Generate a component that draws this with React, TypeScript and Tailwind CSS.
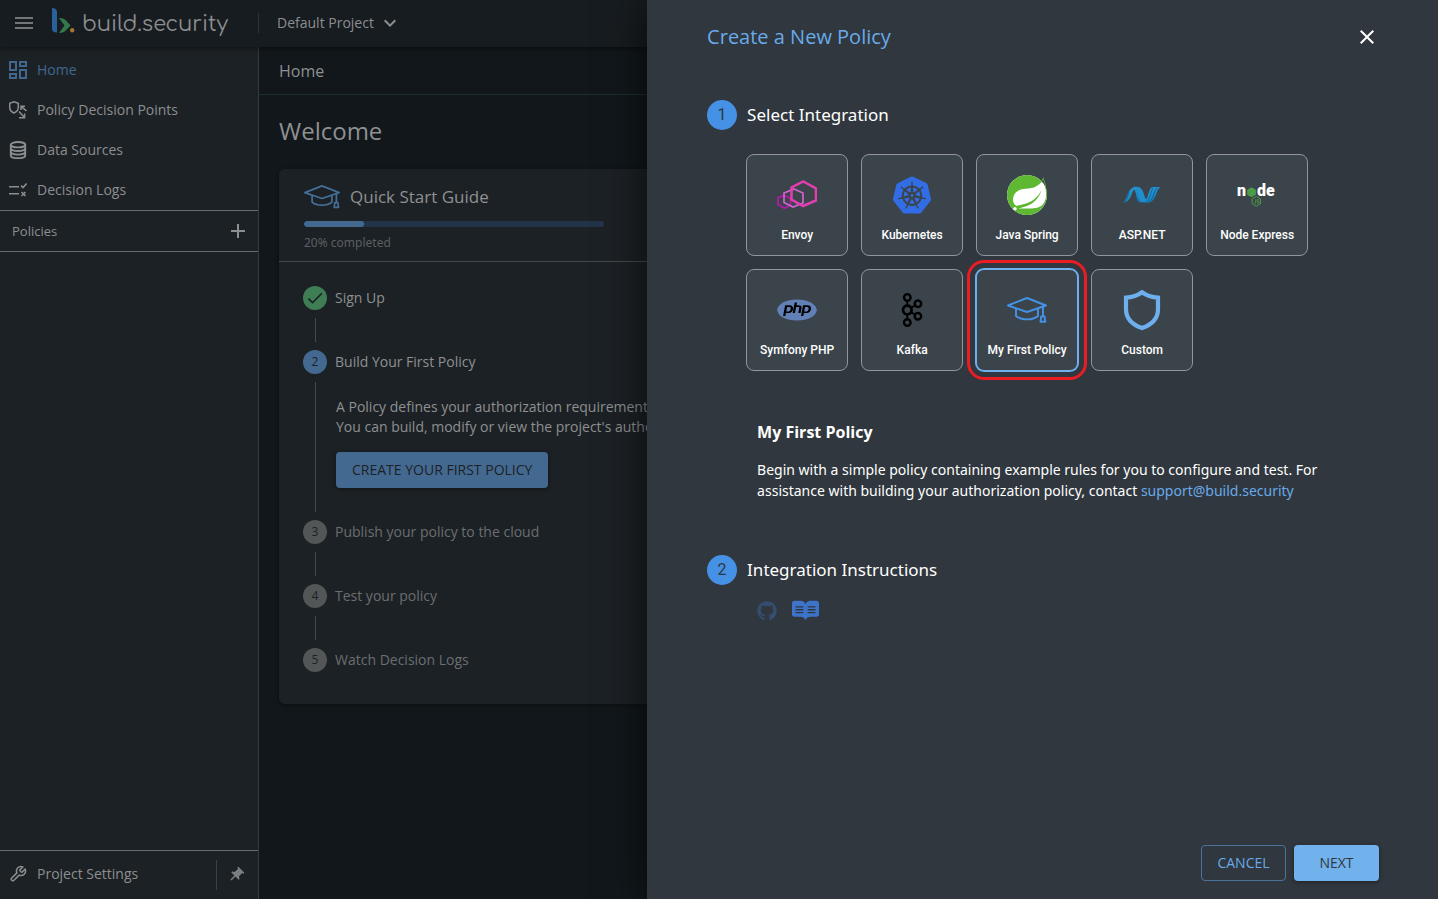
import type { ReactNode } from "react";
import { MdOutlineDashboard, MdPushPin, MdCheck, MdClose, MdMenu, MdExpandMore, MdAdd } from "react-icons/md";
import { SiKubernetes, SiSpring, SiPhp, SiApachekafka } from "react-icons/si";
import { FaReadme, FaGithub } from "react-icons/fa";
import { LuWrench } from "react-icons/lu";

function BrandMark() {
  return (
    <svg width="24" height="26" viewBox="0 0 24 26" aria-hidden="true">
      <path d="M0 0C3 0 5 1.500 5 4V24.500C2 24.500 0 23.500 0 21Z" fill="#2a619b" />
      <path d="M7 10C10.500 9.800 12.300 10.700 14 12.500L18.500 17.500L14 22.300C12.300 24.200 10.500 25 7 25L12.500 17.500Z" fill="#35794b" />
      <circle cx="20.200" cy="22.300" r="2.200" fill="#a5762d" />
    </svg>
  );
}

function GradCap({ className }: { className: string }) {
  return (
    <svg className={className} viewBox="0 0 40 26" fill="none" stroke="currentColor" strokeWidth="1.900" strokeLinejoin="round" aria-hidden="true">
      <path d="M20 1L39 8.500L20 15L1 8.500Z" />
      <path d="M9 11.500V19C14 23.500 26 23.500 31 19V11.500M36 9.700V19" />
      <path d="M34.200 19.500H37.600L38.300 24.800H33.500Z" />
    </svg>
  );
}

function PolicyPointsIcon() {
  return (
    <svg width="18" height="18" viewBox="0 0 18 18" fill="none" stroke="currentColor" strokeWidth="1.500" aria-hidden="true">
      <path d="M5 0.800L9.300 2.300V6.300C9.300 9 7.500 11 5 12C2.500 11 0.700 9 0.700 6.300V2.300Z" />
      <path d="M17.500 9.800L12 5.300M12 9V5.200H16M10 10.500L15.500 16.500M10 16.700H15.600V12.500" />
    </svg>
  );
}

function DatabaseIcon() {
  return (
    <svg width="18" height="18" viewBox="0 0 18 18" fill="none" stroke="currentColor" strokeWidth="1.900" aria-hidden="true">
      <ellipse cx="9" cy="3.700" rx="7.200" ry="2.700" />
      <path d="M1.800 3.600V14.400C1.800 18 16.200 18 16.200 14.400V3.600M1.800 7.200C1.800 10.900 16.200 10.900 16.200 7.200M1.800 10.800C1.800 14.500 16.200 14.500 16.200 10.800" />
    </svg>
  );
}

function DecisionIcon() {
  return (
    <svg width="18" height="18" viewBox="0 0 18 18" fill="none" stroke="currentColor" strokeWidth="1.600" aria-hidden="true">
      <path d="M0 5.700H10M0 12.700H10M12 4.500L14 6.500L17.700 2.500M12.500 11L16.500 15M16.500 11L12.500 15" />
    </svg>
  );
}

function EnvoyLogo() {
  return (
    <svg width="40" height="30" viewBox="0 0 40 30" fill="none" aria-hidden="true">
      <path d="M7.500 15.500L13.500 18.500V25.500L7.300 28.300L1 24.500V17.500Z" stroke="#b31aab" strokeWidth="1.700" />
      <path d="M17 9L26 13V23L16 27L7 22.500V13Z" stroke="#d163ce" strokeWidth="1.700" />
      <path d="M26.300 1.500L39 8.300V20.500L26 26L14.500 19.500V7.500Z" stroke="#e33eb0" strokeWidth="2.500" />
    </svg>
  );
}

function AspNetLogo() {
  return (
    <svg width="40" height="18" viewBox="0 0 40 18" aria-hidden="true">
      <defs>
        <linearGradient id="wave" x1="0" y1="0" x2="1" y2="1">
          <stop offset="0" stopColor="#35a5dd" />
          <stop offset="1" stopColor="#0870b4" />
        </linearGradient>
      </defs>
      <path d="M1 16.500C5 14 5.500 3 12 1C16 0 17.500 3.500 18.500 7.500L21 16.500H17.500C14 15 14.500 5 12 3.500C9.500 6 9 16.500 1 16.500Z" fill="url(#wave)" />
      <path d="M12 1C20 -0.500 21 5 22.500 10C23.200 12.500 24 13 25 13.500C23 17.500 18 17.500 16.500 11C15.500 7 15 3.500 12 1Z" fill="#218dc9" />
      <path d="M22 16.500C27 12 26.500 1 31 1H39C34 2 34.500 16.500 26 16.500Z" fill="url(#wave)" />
      <path d="M7 6C5.500 11 4.500 15 1 16.500M31 2C28.500 6 28 14 24 16.500M35 1.500C31.500 6 31 14 27 16" fill="none" stroke="#0a5a94" strokeWidth="0.800" />
    </svg>
  );
}

function NodeLogo() {
  return (
    <svg width="42" height="34" viewBox="-1 -6 42 34" aria-hidden="true">
      <text x="0" y="12" fill="#fff" fontFamily="Roboto" fontWeight="900" fontSize="16">n</text>
      <text x="20" y="12" fill="#fff" fontFamily="Roboto" fontWeight="900" fontSize="16">de</text>
      <path d="M14.500 3.200L18.900 5.700V10.700L14.500 13.200L10.100 10.700V5.700Z" fill="#4b9c45" />
      <path d="M19.300 12.500L23.500 14.900V19.700L19.300 22.100L15.100 19.700V14.900Z" fill="none" stroke="#4b9c45" strokeWidth="1" />
      <path d="M18.700 15.300V19.300L17.300 18.800M22 15.800H20V17.500H22V19.300H20" fill="none" stroke="#4b9c45" strokeWidth="0.800" />
    </svg>
  );
}

function ShieldLogo() {
  return (
    <svg width="38" height="42" viewBox="0 0 38 42" fill="none" stroke="#6eb0ee" strokeWidth="4.200" aria-hidden="true">
      <path d="M19 3.300C14 7 8.500 8.400 3 8.700V20C3 30 10 36 19 39C28 36 35 30 35 20V8.700C29.500 8.400 24 7 19 3.300Z" />
    </svg>
  );
}

const integrations: { name: string; logo: ReactNode }[] = [
  { name: "Envoy", logo: <EnvoyLogo /> },
  { name: "Kubernetes", logo: <SiKubernetes className="size-[38px] text-[#326de6]" /> },
  {
    name: "Java Spring",
    logo: (
      <span className="rounded-full bg-white">
        <SiSpring className="size-10 text-[#5fb832]" />
      </span>
    ),
  },
  { name: "ASP.NET", logo: <AspNetLogo /> },
  { name: "Node Express", logo: <NodeLogo /> },
  {
    name: "Symfony PHP",
    logo: (
      <span className="flex h-[20px] items-center rounded-[50%] bg-black">
        <SiPhp className="size-10 text-[#6181b6]" />
      </span>
    ),
  },
  { name: "Kafka", logo: <SiApachekafka className="size-[34px] text-black" /> },
  { name: "My First Policy", logo: <GradCap className="w-10 text-[#4591e6]" /> },
  { name: "Custom", logo: <ShieldLogo /> },
];

const navItems = [
  { name: "Home", icon: <MdOutlineDashboard className="size-6" />, active: true },
  { name: "Policy Decision Points", icon: <PolicyPointsIcon />, active: false },
  { name: "Data Sources", icon: <DatabaseIcon />, active: false },
  { name: "Decision Logs", icon: <DecisionIcon />, active: false },
];

function Step({ n, label, state, children }: { n: number; label: string; state: "done" | "active" | "todo"; children?: ReactNode }) {
  const badge = state === "done" ? "bg-[#3f7d55]" : state === "active" ? "bg-[#446991]" : "bg-[#535657]";
  return (
    <li>
      <div className="flex h-6 items-center gap-2">
        <span className={`flex size-6 items-center justify-center rounded-full text-xs text-[#1c2125] ${badge}`}>
          {state === "done" ? <MdCheck className="size-5" /> : n}
        </span>
        <span className={state === "todo" ? "text-[#6b6e70]" : "text-[#8e9091]"}>{label}</span>
      </div>
      {n < 5 && (
        <div className="my-2 ml-3 min-h-6 border-l border-[#45494b]">{children}</div>
      )}
    </li>
  );
}

function Header() {
  return (
    <header className="z-10 flex h-[47px] shrink-0 items-center bg-[#171c20] pb-0.5 text-[#8c8e90] shadow-[0_2px_5px_rgba(0,0,0,0.400)]">
      <button type="button" aria-label="Menu" className="ml-3 text-[#737678]">
        <MdMenu className="size-6" />
      </button>
      <a href="#home" className="ml-4 flex w-[206px] items-start gap-1.5">
        <BrandMark />
        <span className="pt-0.5 font-['Comfortaa','Lato',sans-serif] text-[21px] leading-7">build.security</span>
      </a>
      <button type="button" className="flex h-5 items-center gap-1 border-l border-[#303539] pl-[18px] text-sm">
        Default Project
        <MdExpandMore className="size-6" />
      </button>
    </header>
  );
}

function Sidebar() {
  return (
    <nav className="flex w-[259px] shrink-0 flex-col border-r border-[#34393c] bg-[#1c2125] text-sm text-[#8c8e90]">
      <ul className="pt-[3px]">
        {navItems.map((item) => (
          <li key={item.name}>
            <a href="#nav" className={`flex h-10 items-center gap-[7px] pl-1.5 ${item.active ? "text-[#41678f]" : ""}`}>
              <span className="flex size-6 items-center justify-center">{item.icon}</span>
              {item.name}
            </a>
          </li>
        ))}
      </ul>
      <div className="flex h-[42px] items-center justify-between border-y border-[#686b6d] pr-2 pl-3 text-[13px]">
        Policies
        <button type="button" aria-label="Add policy">
          <MdAdd className="size-6" />
        </button>
      </div>
      <div className="mt-auto flex h-[49px] items-center border-t border-[#686b6d]">
        <a href="#settings" className="flex flex-1 items-center gap-[7px] pb-0.5 pl-1.5">
          <span className="flex size-6 items-center justify-center">
            <LuWrench className="size-[18px]" />
          </span>
          Project Settings
        </a>
        <button type="button" aria-label="Pin sidebar" className="flex h-[30px] w-[42px] items-center justify-center border-l border-[#3b4043] pr-1 text-[#7b7f81]">
          <MdPushPin className="size-[18px] rotate-45" />
        </button>
      </div>
    </nav>
  );
}

function Home() {
  return (
    <main className="min-w-0 flex-1 bg-[#11171b] text-[#8e9091]">
      <h1 className="flex h-12 items-center border-b border-[#1b2e31] pl-5 text-base">Home</h1>
      <div className="px-5 pt-5">
        <h2 className="text-2xl leading-8">Welcome</h2>
        <section className="mt-[22px] rounded-md bg-[#1c2125] shadow-[0_1px_4px_rgba(0,0,0,0.400)]">
          <div className="h-[93px] border-b border-[#45494b] px-[25px] pt-[14px]">
            <div className="flex h-7 items-center gap-[10px]">
              <GradCap className="w-9 text-[#446f96]" />
              <h3 className="text-[17px] leading-7">Quick Start Guide</h3>
            </div>
            <div className="mt-[10px] h-1.5 w-[300px] overflow-hidden rounded-full bg-[#233449]">
              <div className="h-full w-1/5 rounded-full bg-[#446991]" />
            </div>
            <p className="mt-1.5 font-['Noto_Sans',sans-serif] text-xs leading-5 text-[#5b5f62]">20% completed</p>
          </div>
          <ol className="px-6 pt-6 pb-8 text-sm">
            <Step n={1} label="Sign Up" state="done" />
            <Step n={2} label="Build Your First Policy" state="active">
              <div className="w-[640px] pt-[15px] pb-6 pl-5">
                <p className="leading-5">
                  A Policy defines your authorization requirements.
                  <br />
                  You can build, modify or view the project's authorization
                </p>
                <button type="button" className="mt-[15px] h-9 rounded bg-[#446991] px-4 text-[#1c2125] shadow-[0_1px_4px_rgba(0,0,0,0.400)]">
                  CREATE YOUR FIRST POLICY
                </button>
              </div>
            </Step>
            <Step n={3} label="Publish your policy to the cloud" state="todo" />
            <Step n={4} label="Test your policy" state="todo" />
            <Step n={5} label="Watch Decision Logs" state="todo" />
          </ol>
        </section>
      </div>
    </main>
  );
}

function SectionTitle({ n, children }: { n: number; children: ReactNode }) {
  return (
    <h3 className="flex items-center gap-[10px] font-['Noto_Sans',sans-serif] text-[17px] leading-[30px] text-white">
      <span className="flex size-[30px] items-center justify-center rounded-full bg-[#4591e6] font-[Roboto,sans-serif] text-base text-[#30373e]">{n}</span>
      {children}
    </h3>
  );
}

function PolicyDrawer() {
  return (
    <aside
      role="dialog"
      aria-label="Create a New Policy"
      className="absolute inset-y-0 right-0 z-20 flex w-[55%] flex-col bg-[#30373e] pr-[59px] pb-[18px] pl-[60px] text-white shadow-[0_0_40px_rgba(0,0,0,0.700)]"
    >
      <div className="mt-[21px] flex h-8 items-center justify-between">
        <h2 className="text-xl text-[#69aae9]">Create a New Policy</h2>
        <button type="button" aria-label="Close">
          <MdClose className="size-6" />
        </button>
      </div>
      <div className="mt-[47px]">
        <SectionTitle n={1}>Select Integration</SectionTitle>
      </div>
      <div className="mt-6 ml-[39px] flex flex-wrap gap-[13px]">
        {integrations.map((item) => {
          const selected = item.name === "My First Policy";
          return (
            <button
              key={item.name}
              type="button"
              aria-pressed={selected}
              className={`flex size-[102px] flex-col items-center rounded-lg border bg-[#3b444b] pt-[15px] ${
                selected ? "border-[#6eb0ee] ring-1 ring-[#6eb0ee] outline-3 outline-offset-6 outline-[#ea1c24]" : "border-[#929699]"
              }`}
            >
              <span className="flex h-[50px] items-center justify-center">{item.logo}</span>
              <span className="mt-[5px] font-[Roboto,sans-serif] text-xs leading-5 font-medium whitespace-nowrap">{item.name}</span>
            </button>
          );
        })}
      </div>
      <div className="mt-[49px] ml-[50px]">
        <h3 className="text-base leading-6 font-bold">My First Policy</h3>
        <p className="mt-[15px] max-w-[600px] font-['Noto_Sans',sans-serif] text-sm leading-[21px]">
          Begin with a simple policy containing example rules for you to configure and test. For assistance with building your authorization policy, contact{" "}
          <a href="mailto:support@build.security" className="text-[#69aae9]">
            support@build.security
          </a>
        </p>
      </div>
      <div className="mt-[54px]">
        <SectionTitle n={2}>Integration Instructions</SectionTitle>
      </div>
      <div className="mt-3 ml-[50px] flex items-center gap-[15px]">
        <a href="#github" aria-label="GitHub">
          <FaGithub className="size-5 text-[#344d70]" />
        </a>
        <a href="#docs" aria-label="Documentation">
          <FaReadme className="size-[27px] text-[#3d74c9]" />
        </a>
      </div>
      <div className="mt-auto flex justify-end gap-2 text-sm">
        <button type="button" className="h-9 w-[85px] rounded border border-[#4d729a] text-[#69aae9]">
          CANCEL
        </button>
        <button type="button" className="h-9 w-[85px] rounded bg-[#71b1ec] text-[#30373e] shadow-[0_1px_4px_rgba(0,0,0,0.400)]">
          NEXT
        </button>
      </div>
    </aside>
  );
}

export default function App() {
  return (
    <div className="relative flex h-screen flex-col overflow-hidden bg-[#11171b] font-['Open_Sans',sans-serif]">
      <Header />
      <div className="flex min-h-0 flex-1">
        <Sidebar />
        <Home />
      </div>
      <PolicyDrawer />
    </div>
  );
}
